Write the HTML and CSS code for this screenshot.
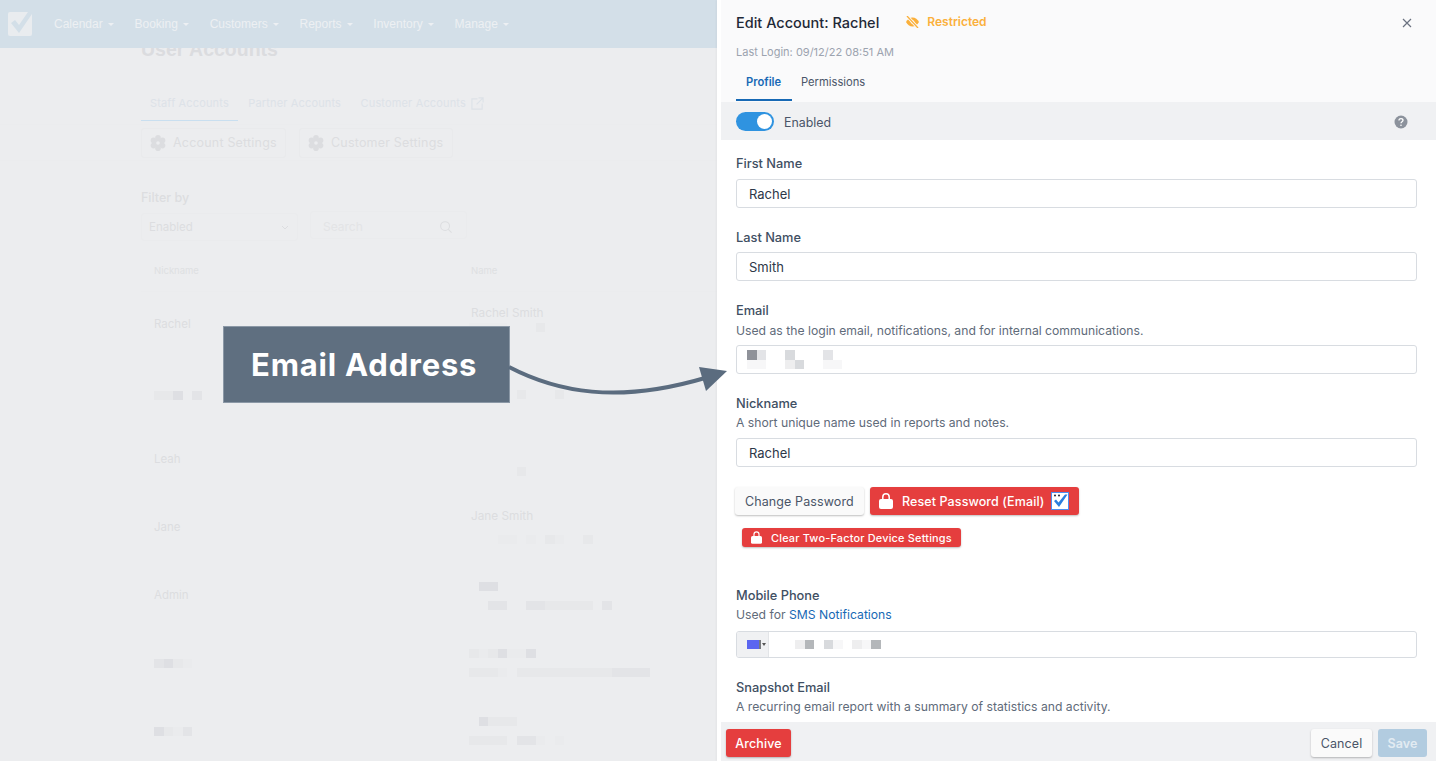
FILE: index.html
```html
<!DOCTYPE html>
<html lang="en">
  <head>
    <meta charset="UTF-8" />
    <meta name="viewport" content="width=device-width, initial-scale=1.0" />
    <title>Edit Account</title>
    <link rel="stylesheet" href="styles.css">
  </head>
  <body>
    <nav class="topnav">
      <svg class="logo" width="24" height="24" viewBox="0 0 24 24">
        <rect width="24" height="24" rx="2" fill="#e9ecef" />
        <path d="M3 11l4-3 4 5L20 0h4v2L11 21z" fill="#d3dfe8" />
      </svg>
      <a class="nav-link">Calendar</a>
      <a class="nav-link">Booking</a>
      <a class="nav-link">Customers</a>
      <a class="nav-link">Reports</a>
      <a class="nav-link">Inventory</a>
      <a class="nav-link">Manage</a>
    </nav>

    <main class="page">
      <h1 class="page-title">User Accounts</h1>
      <div class="page-tabs">
        <span class="page-tab active">Staff Accounts</span>
        <span class="page-tab">Partner Accounts</span>
        <span class="page-tab">Customer Accounts
          <svg width="13" height="13" viewBox="0 0 14 14" fill="none" stroke="#dde2e8" stroke-width="1.2"><path d="M7 2H1v11h11V7M8 1h5v5M13 1L6 8" /></svg>
        </span>
      </div>
      <div class="settings-row">
        <span class="ghost-btn account-btn">
          <svg width="16" height="16" viewBox="0 0 16 16"><g fill="#dcdde0"><circle cx="8" cy="2.800" r="2.800" /><circle cx="12.500" cy="5.400" r="2.800" /><circle cx="12.500" cy="10.600" r="2.800" /><circle cx="8" cy="13.200" r="2.800" /><circle cx="3.500" cy="10.600" r="2.800" /><circle cx="3.500" cy="5.400" r="2.800" /><circle cx="8" cy="8" r="4" /></g><circle cx="8" cy="8" r="1.800" fill="#ecedef" /></svg>
          Account Settings
        </span>
        <span class="ghost-btn customer-btn">
          <svg width="16" height="16" viewBox="0 0 16 16"><g fill="#dcdde0"><circle cx="8" cy="2.800" r="2.800" /><circle cx="12.500" cy="5.400" r="2.800" /><circle cx="12.500" cy="10.600" r="2.800" /><circle cx="8" cy="13.200" r="2.800" /><circle cx="3.500" cy="10.600" r="2.800" /><circle cx="3.500" cy="5.400" r="2.800" /><circle cx="8" cy="8" r="4" /></g><circle cx="8" cy="8" r="1.800" fill="#ecedef" /></svg>
          Customer Settings
        </span>
      </div>
      <div class="filter-label">Filter by</div>
      <div class="filter-row">
        <div class="filter-select">Enabled
          <svg width="8" height="5" viewBox="0 0 8 5" fill="none" stroke="#dcdde0"><path d="M1 1l3 3 3-3" /></svg>
        </div>
        <div class="filter-search">Search
          <svg width="12" height="12" viewBox="0 0 13 13" fill="none" stroke="#dcdde0" stroke-width="1.1"><circle cx="5.500" cy="5.500" r="4.800" /><path d="M9 9l3.500 3.500" /></svg>
        </div>
      </div>

      <div class="accounts">
        <div class="accounts-head"><span class="col-nick">Nickname</span><span>Name</span></div>

        <div class="row row-1">
          <div class="col-nick">Rachel</div>
          <div class="col-name">
            <div>Rachel Smith</div>
            <div class="px-row"><i class="px f"></i><i class="px f"></i><i class="px f"></i><i class="px f"></i><i class="px"></i><i class="px"></i><i class="px"></i><i class="px l"></i></div>
          </div>
        </div>
        <div class="row row-2">
          <div class="col-nick"><div class="px-row"><i class="px l"></i><i class="px l"></i><i class="px d"></i><i class="px"></i><i class="px m"></i></div></div>
          <div class="col-name">
            <div class="px-row"><i class="px"></i><i class="px"></i><i class="px"></i><i class="px"></i><i class="px"></i><i class="px l"></i><i class="px"></i><i class="px"></i><i class="px"></i><i class="px l"></i></div>
          </div>
        </div>
        <div class="row row-3">
          <div class="col-nick">Leah</div>
          <div class="col-name"><div class="px-row"><i class="px"></i><i class="px"></i><i class="px"></i><i class="px"></i><i class="px"></i><i class="px l"></i></div></div>
        </div>
        <div class="row row-4">
          <div class="col-nick">Jane</div>
          <div class="col-name">
            <div>Jane Smith</div>
            <div class="px-row"><i class="px"></i><i class="px"></i><i class="px"></i><i class="px f"></i><i class="px f"></i><i class="px"></i><i class="px f"></i><i class="px"></i><i class="px l"></i><i class="px f"></i><i class="px"></i><i class="px"></i><i class="px l"></i></div>
          </div>
        </div>
        <div class="row row-5">
          <div class="col-nick">Admin</div>
          <div class="col-name">
            <div class="px-row"><i class="px"></i><i class="px d"></i><i class="px d"></i></div>
            <div class="px-row gap"><i class="px"></i><i class="px"></i><i class="px m"></i><i class="px m"></i><i class="px"></i><i class="px"></i><i class="px m"></i><i class="px m"></i><i class="px l"></i><i class="px l"></i><i class="px l"></i><i class="px l"></i><i class="px l"></i><i class="px"></i><i class="px m"></i></div>
          </div>
        </div>
        <div class="row row-6">
          <div class="col-nick"><div class="px-row"><i class="px m"></i><i class="px d"></i><i class="px l"></i><i class="px f"></i></div></div>
          <div class="col-name">
            <div class="px-row"><i class="px l"></i><i class="px f"></i><i class="px l"></i><i class="px d"></i><i class="px f"></i><i class="px f"></i><i class="px d"></i></div>
            <div class="px-row gap"><i class="px l"></i><i class="px l"></i><i class="px l"></i><i class="px f"></i><i class="px"></i><i class="px l"></i><i class="px l"></i><i class="px l"></i><i class="px l"></i><i class="px l"></i><i class="px l"></i><i class="px l"></i><i class="px l"></i><i class="px l"></i><i class="px l"></i><i class="px m"></i><i class="px m"></i><i class="px m"></i><i class="px m"></i></div>
          </div>
        </div>
        <div class="row row-7">
          <div class="col-nick"><div class="px-row"><i class="px d"></i><i class="px l"></i><i class="px f"></i><i class="px m"></i></div></div>
          <div class="col-name">
            <div class="px-row"><i class="px"></i><i class="px d"></i><i class="px l"></i><i class="px l"></i><i class="px l"></i></div>
            <div class="px-row gap"><i class="px l"></i><i class="px l"></i><i class="px l"></i><i class="px l"></i><i class="px"></i><i class="px m"></i><i class="px m"></i><i class="px f"></i><i class="px"></i><i class="px f"></i></div>
          </div>
        </div>
      </div>
    </main>

    <aside class="drawer">
      <header class="drawer-head">
        <div class="drawer-title">
          <h2>Edit Account: Rachel</h2>
          <span class="restricted">
            <svg width="13" height="12" viewBox="0 0 13 12"><path fill="#fbb03b" d="M6.500 1.500C9.300 1.500 11.700 3.300 13 6c-1.300 2.700-3.700 4.500-6.500 4.500S1.300 8.700 0 6c1.300-2.700 3.700-4.500 6.500-4.500z" /><circle cx="6.500" cy="6" r="1.800" fill="#fafafb" /><path stroke="#fafafb" stroke-width="3" d="M1 0l11 12" /><path stroke="#fbb03b" stroke-width="1.300" d="M1 0l11 12" /></svg>
            Restricted
          </span>
          <svg class="close" width="10" height="10" viewBox="0 0 10 10" stroke="#6b7280" stroke-width="1.200"><path d="M1 1l8 8M9 1l-8 8" /></svg>
        </div>
        <div class="last-login">Last Login: 09/12/22 08:51 AM</div>
        <div class="drawer-tabs">
          <span class="drawer-tab active">Profile</span>
          <span class="drawer-tab">Permissions</span>
        </div>
      </header>

      <div class="enabled-bar">
        <span class="toggle"><span class="knob"></span></span>
        <span class="enabled-text">Enabled</span>
        <svg class="help" width="14" height="14" viewBox="0 0 14 14"><circle cx="7" cy="7" r="6.500" fill="#8c929c" /><path d="M5 5.400c0-1.100.9-1.800 2-1.800s2 .7 2 1.700c0 1.500-2 1.400-2 2.900" fill="none" stroke="#fff" stroke-width="1.300" /><circle cx="7" cy="10.300" r=".8" fill="#fff" /></svg>
      </div>

      <div class="form">
        <div class="field first">
          <label class="field-label">First Name</label>
          <div class="input">Rachel</div>
        </div>
        <div class="field field-last">
          <label class="field-label">Last Name</label>
          <div class="input">Smith</div>
        </div>
        <div class="field field-email">
          <label class="field-label">Email</label>
          <p class="hint">Used as the login email, notifications, and for internal communications.</p>
          <div class="input">
            <div class="blur-grid">
              <i class="c dark"></i><i class="c light"></i><i></i><i></i><i class="c mid"></i><i></i><i></i><i></i><i class="c light"></i><i></i>
              <i class="c faint"></i><i class="c faint"></i><i></i><i></i><i class="c pale"></i><i class="c mid"></i><i></i><i></i><i class="c faint"></i><i class="c faint"></i>
            </div>
          </div>
        </div>
        <div class="field">
          <label class="field-label">Nickname</label>
          <p class="hint">A short unique name used in reports and notes.</p>
          <div class="input">Rachel</div>
        </div>

        <div class="btn-row">
          <button class="btn btn-change">Change Password</button>
          <button class="btn btn-red btn-reset">
            <svg class="lock" width="14" height="16" viewBox="0 0 14 16"><path fill="#fff" d="M2 6h10a2 2 0 0 1 2 2v6a2 2 0 0 1-2 2H2a2 2 0 0 1-2-2V8a2 2 0 0 1 2-2z" /><path fill="none" stroke="#fff" stroke-width="1.500" d="M3.800 7V4a3.200 3.200 0 0 1 6.400 0v3" /></svg>
            Reset Password (Email)
            <svg class="mini-logo" width="18" height="18" viewBox="0 0 18 18"><rect x=".5" y=".5" width="17" height="17" fill="#fff" stroke="#4d8df0" /><path d="M3 9l2-1.500 2.500 3L14 2.500h2.500L8 15z" fill="#2b7fe0" /><circle cx="4" cy="3.500" r="1" fill="#223" /><circle cx="8" cy="3.500" r="1" fill="#223" /></svg>
          </button>
        </div>
        <button class="btn btn-red btn-small">
          <svg class="lock" width="11" height="13" viewBox="0 0 14 16"><path fill="#fff" d="M2 6h10a2 2 0 0 1 2 2v6a2 2 0 0 1-2 2H2a2 2 0 0 1-2-2V8a2 2 0 0 1 2-2z" /><path fill="none" stroke="#fff" stroke-width="1.500" d="M3.800 7V4a3.200 3.200 0 0 1 6.400 0v3" /></svg>
          Clear Two-Factor Device Settings
        </button>

        <div class="field phone-field">
          <label class="field-label">Mobile Phone</label>
          <p class="hint">Used for <a class="link">SMS Notifications</a></p>
          <div class="input input-phone">
            <div class="flag-box"><span class="flag"></span><span class="flag-caret"></span></div>
            <div class="phone-blur">
              <i class="c pale"></i><i class="c dark-soft"></i><i class="c"></i><i class="c mid"></i><i class="c faint"></i><i class="c"></i><i class="c pale"></i><i class="c faint"></i><i class="c dark-soft"></i>
            </div>
          </div>
        </div>
        <div class="field">
          <label class="field-label">Snapshot Email</label>
          <p class="hint">A recurring email report with a summary of statistics and activity.</p>
        </div>
      </div>

      <footer class="drawer-foot">
        <button class="btn btn-red btn-archive">Archive</button>
        <button class="btn btn-cancel">Cancel</button>
        <button class="btn btn-save">Save</button>
      </footer>
    </aside>

    <div class="callout">Email Address</div>
    <svg class="callout-arrow" width="240" height="50" viewBox="0 0 240 50">
      <path d="M2 21C50 46 110 58 198 32" fill="none" stroke="#5b6c7f" stroke-width="4" />
      <path d="M192 21L220 25 199 45z" fill="#5b6c7f" />
    </svg>
  </body>
</html>
```

FILE: styles.css
```css
* {
  box-sizing: border-box;
}
html,
body {
  margin: 0;
  height: 100%;
  overflow: hidden;
}
body {
  position: relative;
  background-color: #ecedef;
  font-family: "Inter", "Liberation Sans", sans-serif;
}

/* top nav */
.topnav {
  position: relative;
  z-index: 2;
  display: flex;
  align-items: center;
  height: 48px;
  padding-left: 8px;
  background-color: #d3dfe8;
}
.logo {
  margin-right: 22px;
}
.nav-link {
  display: flex;
  align-items: center;
  margin-right: 20.800px;
  font-family: "Liberation Sans", sans-serif;
  font-size: 12px;
  color: #edf0f3;
}
.nav-link::after {
  content: "";
  margin-left: 5px;
  border-top: 3px solid #edf0f3;
  border-left: 3px solid transparent;
  border-right: 3px solid transparent;
}

/* faded page behind the drawer */
.page {
  padding-left: 141px;
  color: #dcdde0;
  font-size: 11px;
}
.page-title {
  margin: -9px 0 0;
  font-family: "Liberation Sans", sans-serif;
  font-size: 19.500px;
  line-height: 20px;
  font-weight: bold;
  color: #dbdcdf;
}
.page-tabs {
  display: flex;
  margin-top: 33px;
  width: 560px;
}
.page-tab {
  display: flex;
  align-items: center;
  gap: 5px;
  height: 29px;
  padding: 0 9px 7px;
  margin-right: 1.500px;
  color: #dde2e8;
  letter-spacing: 0.15px;
}
.page-tab.active {
  border-bottom: 1px solid #c9dff0;
}
.settings-row {
  display: flex;
  gap: 13px;
  align-items: center;
  height: 37px;
  margin-top: 3px;
  margin-left: -141px;
  padding-left: 141px;
  border-top: 1px solid #ebecee;
  border-bottom: 1px solid #ebecee;
}
.ghost-btn {
  display: flex;
  align-items: center;
  gap: 7px;
  height: 30px;
  padding-left: 8px;
  border: 1px solid #e9eaec;
  border-radius: 3px;
  font-size: 12.500px;
  letter-spacing: 0.2px;
}
.account-btn {
  width: 145px;
}
.customer-btn {
  width: 154px;
}
.filter-label {
  margin-top: 29px;
  font-size: 12.500px;
  font-weight: 500;
  line-height: 16px;
}
.filter-row {
  display: flex;
  gap: 12px;
  margin-top: 7px;
}
.filter-select,
.filter-search {
  display: flex;
  align-items: center;
  justify-content: space-between;
  width: 157px;
  height: 28px;
  border: 1px solid #eaebed;
  border-radius: 3px;
  padding: 0 8px 0 7px;
  font-size: 11.500px;
}
.filter-search {
  margin-top: -2px;
  padding: 3px 14px 0 12px;
  font-size: 12px;
  color: #e3e4e6;
}
.accounts {
  margin-top: 9px;
  width: 576px;
  color: #dcdde0;
}
.accounts-head {
  display: flex;
  align-items: center;
  height: 42px;
  border-bottom: 1px solid #ebecee;
  font-size: 9.500px;
  margin-top: 1px;
  padding-left: 13px;
  color: #dee0e2;
}
.accounts-head .col-nick {
  width: 317px;
}
.row {
  display: flex;
  padding-left: 13px;
  font-size: 11.500px;
  line-height: 14px;
}
.row .col-nick {
  width: 317px;
  align-self: center;
  margin-top: 2px;
}
.col-name {
  flex: 1;
  font-size: 11.800px;
}
.col-name .px-row {
  margin-left: -2px;
}
.row-1 { height: 67px; }
.row-1 .col-nick { margin-top: -3px; }
.row-1 .col-name { padding-top: 14px; }
.row-1 .px-row { margin-top: 3px; }
.row-2 { height: 70px; }
.row-2 .col-name { padding-top: 31px; }
.row-3 { height: 63px; }
.row-3 .col-nick { margin-top: -3px; }
.row-3 .col-name { padding-top: 38px; }
.row-4 { height: 68px; }
.row-4 .col-name { padding-top: 17px; }
.row-4 .px-row { margin-top: 12px; }
.row-5,
.row-6,
.row-7 { height: 68px; }
.row-5 .col-name { padding-top: 22px; }
.row-6 .col-name,
.row-7 .col-name { padding-top: 21px; }
.px-row {
  display: flex;
}
.col-name .px-row.gap {
  margin-top: 10px;
}
.px {
  display: block;
  width: 9.500px;
  height: 9px;
}
.px.f { background-color: #eaebed; }
.px.l { background-color: #e7e8ea; }
.px.m { background-color: #e3e4e7; }
.px.d { background-color: #dedfe3; }

/* drawer */
.drawer {
  position: absolute;
  top: 0;
  right: 0;
  bottom: 0;
  z-index: 3;
  display: flex;
  flex-direction: column;
  width: 719px;
  padding-left: 4px;
  background-color: #fff;
  box-shadow: -1px 0 2px rgba(0, 0, 0, 0.04);
  overflow: hidden;
  color: #2d3748;
}
.drawer-head {
  height: 102px;
  padding: 0 0 0 15px;
  background-color: #fafafb;
}
.drawer-title {
  display: flex;
  align-items: center;
  height: 45px;
  padding-right: 24px;
}
.drawer-title h2 {
  margin: 0;
  font-size: 14.500px;
  font-weight: 500;
  color: #1f2937;
}
.restricted {
  display: flex;
  align-items: center;
  gap: 8px;
  margin-left: 27px;
  margin-top: -2px;
  font-size: 12px;
  font-weight: 600;
  color: #fbb03b;
}
.close {
  margin-left: auto;
}
.last-login {
  font-size: 11px;
  line-height: 14px;
  color: #9ca3af;
}
.drawer-tabs {
  display: flex;
  margin-top: 8px;
}
.drawer-tab {
  height: 34px;
  padding: 8px 10px 0 9px;
  font-size: 11.200px;
  color: #4a5568;
}
.drawer-tab.active {
  width: 56px;
  padding-left: 10px;
  font-weight: 600;
  color: #1769b5;
  border-bottom: 2px solid #1769b5;
}
.enabled-bar {
  display: flex;
  align-items: center;
  flex: none;
  height: 38px;
  padding: 1px 28px 0 15px;
  background-color: #f0f1f3;
}
.toggle {
  display: flex;
  justify-content: flex-end;
  align-items: center;
  width: 38px;
  height: 19px;
  padding-right: 2px;
  border-radius: 10px;
  background-color: #2f93e0;
}
.knob {
  width: 15px;
  height: 15px;
  border-radius: 50%;
  background-color: #fff;
}
.enabled-text {
  margin-left: 10px;
  margin-top: 1px;
  font-size: 12.400px;
  color: #4a5568;
}
.help {
  margin-left: auto;
}
.form {
  flex: 1;
  padding: 0 19px 0 15px;
  overflow: hidden;
}
.field {
  margin-top: 22px;
}
.field.first {
  margin-top: 16px;
}
.field-label {
  display: block;
  font-size: 12.800px;
  font-weight: 500;
  line-height: 16px;
  color: #3f4f63;
}
.hint {
  margin: 3px 0 0;
  font-size: 12.200px;
  line-height: 16px;
  color: #5f6b7a;
}
.link {
  color: #1769b5;
}
.input {
  display: flex;
  align-items: center;
  height: 29px;
  margin-top: 7px;
  padding: 0 12px;
  border: 1px solid #d8dce1;
  border-radius: 3px;
  background-color: #fff;
  font-size: 13px;
  color: #2d3748;
}
.field-last .input {
  margin-top: 6px;
}
.field-email .hint {
  margin-top: 4px;
}
.field-email .input {
  margin-top: 6px;
}
.blur-grid {
  display: grid;
  grid-template-columns: repeat(10, 9.500px);
  grid-auto-rows: 9.500px;
  margin-left: -2px;
}
.c {
  display: block;
  width: 9.500px;
  height: 9.500px;
}
.c.dark { background-color: #8f9299; }
.c.dark-soft { background-color: #b4b7ba; }
.c.mid { background-color: #d8dadd; }
.c.light { background-color: #e3e4e7; }
.c.pale { background-color: #eeeeef; }
.c.faint { background-color: #f7f7f8; }

.btn {
  display: inline-flex;
  align-items: center;
  height: 28px;
  padding: 0 10px;
  border: 0;
  border-radius: 3px;
  background-color: #fafafa;
  box-shadow: 0 1px 2px rgba(0, 0, 0, 0.25);
  font-family: "Inter", "Liberation Sans", sans-serif;
  font-size: 12.500px;
  letter-spacing: 0.1px;
  white-space: nowrap;
  color: #4a5568;
}
.btn-red {
  background-color: #e53e3e;
  color: #fff;
  font-weight: 500;
}
.btn-row {
  display: flex;
  gap: 6px;
  margin-top: 20px;
  margin-left: -1px;
}
.btn-change {
  width: 129px;
}
.btn-reset {
  width: 209px;
  padding: 0 0 0 9px;
}
.lock {
  margin-right: 9px;
}
.mini-logo {
  margin-left: 7px;
}
.btn-small {
  display: flex;
  height: 19px;
  width: 219px;
  margin-top: 13px;
  margin-left: 6px;
  padding: 0 0 0 9px;
  font-size: 10.900px;
  letter-spacing: 0.2px;
}
.phone-field {
  margin-top: 41px;
}
.input-phone {
  padding: 0;
  height: 27px;
  margin-top: 8px;
  overflow: hidden;
}
.flag-box {
  display: flex;
  align-items: center;
  height: 100%;
  width: 32px;
  padding-left: 10px;
  background-color: #f0f1f3;
  border-right: 1px solid #e3e5e8;
}
.flag {
  width: 14px;
  height: 9px;
  background: linear-gradient(to right, #5b66f0 85%, #77797e 85%);
}
.flag-caret {
  margin-left: 1px;
  border-top: 3px solid #555;
  border-left: 2px solid transparent;
  border-right: 2px solid transparent;
}
.phone-blur {
  display: flex;
  margin-left: 26px;
}
.drawer-foot {
  display: flex;
  align-items: center;
  flex: none;
  height: 39px;
  padding: 3px 9px 0 5px;
  background-color: #f0f1f3;
}
.btn-archive {
  width: 65px;
  justify-content: center;
}
.btn-cancel {
  width: 61px;
  justify-content: center;
  margin-left: auto;
}
.btn-save {
  width: 49px;
  justify-content: center;
  margin-left: 6px;
  background-color: #b2cce0;
  color: #e2ebf2;
  font-weight: 600;
  box-shadow: none;
}

/* annotation on top of everything */
.callout {
  position: absolute;
  top: 326px;
  left: 223px;
  z-index: 4;
  width: 287px;
  height: 77px;
  padding-left: 27px;
  line-height: 75px;
  border: 1px solid #8b98a6;
  background-color: #5f6f80;
  color: #fff;
  font-size: 31px;
  font-weight: 700;
  letter-spacing: 0.800px;
}
.callout-arrow {
  position: absolute;
  top: 346px;
  left: 507px;
  z-index: 5;
}
```
